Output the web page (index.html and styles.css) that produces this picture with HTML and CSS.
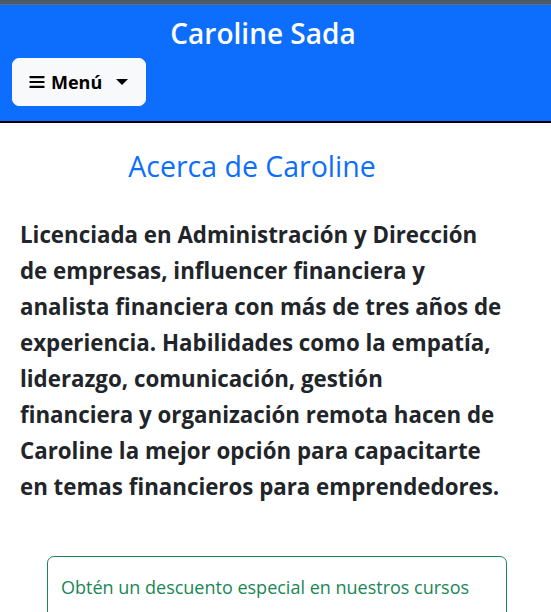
FILE: index.html
```html
<!DOCTYPE html>
<html lang="es">
<head>
<meta charset="utf-8">
<title>Caroline Sada</title>
<link rel="stylesheet" href="styles.css">
</head>
<body>
<div class="topstrip"></div>
<header class="site-header">
  <h1 class="site-title">Caroline Sada</h1>
  <div class="nav-row">
    <button class="menu-btn" type="button">
      <svg class="menu-icon" width="16" height="16" viewBox="0 0 16 16" aria-hidden="true">
        <rect x="0.5" y="2" width="15" height="2.2" rx="0.6"/>
        <rect x="0.5" y="6.9" width="15" height="2.2" rx="0.6"/>
        <rect x="0.5" y="11.8" width="15" height="2.2" rx="0.6"/>
      </svg>
      <span class="menu-label">Menú</span>
      <span class="caret"></span>
    </button>
  </div>
</header>
<main class="content">
  <h2 class="about-title">Acerca de Caroline</h2>
  <p class="about-text">Licenciada en Administración y Dirección<br>de empresas, influencer financiera y<br>analista financiera con más de tres años de<br>experiencia. Habilidades como la empatía,<br>liderazgo, comunicación, gestión<br>financiera y organización remota hacen de<br>Caroline la mejor opción para capacitarte<br>en temas financieros para emprendedores.</p>
  <div class="promo-card">
    <h5 class="promo-text">Obtén un descuento especial en nuestros cursos</h5>
  </div>
</main>
</body>
</html>
```
FILE: styles.css
```css
html, body {
  margin: 0;
  padding: 0;
  background: #ffffff;
  overflow: hidden;
}
body {
  font-family: "Open Sans", "Noto Sans", sans-serif;
  color: #212529;
}
.topstrip {
  height: 4px;
  background: #4d5b68;
  border-bottom: 1px solid #5d6d7c;
}
.site-header {
  background: #0d6efd;
  padding: 10px 0 15px;
  border-bottom: 2px solid #000000;
}
.site-title {
  margin: 0 0 7px;
  padding-right: 25px;
  text-align: center;
  color: #ffffff;
  font-size: 28px;
  font-weight: 600;
  line-height: 36px;
}
.nav-row {
  padding-left: 12px;
}
.menu-btn {
  display: inline-flex;
  align-items: center;
  height: 48px;
  width: 134px;
  padding: 0 0 0 16px;
  border: 1px solid #f8f9fa;
  border-radius: 7px;
  background: #f8f9fa;
  color: #000000;
  font-family: "Open Sans", "Noto Sans", sans-serif;
  font-size: 18px;
  font-weight: 700;
  cursor: pointer;
}
.menu-icon {
  fill: #000000;
  flex: none;
}
.menu-label {
  margin-left: 6px;
  line-height: 30px;
}
.caret {
  margin-left: 14px;
  width: 0;
  height: 0;
  border-top: 6px solid #000000;
  border-left: 6px solid transparent;
  border-right: 6px solid transparent;
}
.content {
  padding: 0 20px;
}
.about-title {
  margin: 25px 0 33px;
  padding-right: 47px;
  text-align: center;
  color: #0d6efd;
  font-size: 28.5px;
  font-weight: 400;
  line-height: 36px;
}
.about-text {
  margin: 0 0 51px;
  font-size: 22.3px;
  font-weight: 700;
  line-height: 36px;
}
.promo-card {
  margin-left: 27px;
  width: 460px;
  height: 120px;
  border: 1px solid #198754;
  border-radius: 7px;
  padding: 18px 13px;
  box-sizing: border-box;
}
.promo-text {
  margin: 0;
  color: #198754;
  font-size: 18px;
  font-weight: 400;
  line-height: 24px;
}
```
